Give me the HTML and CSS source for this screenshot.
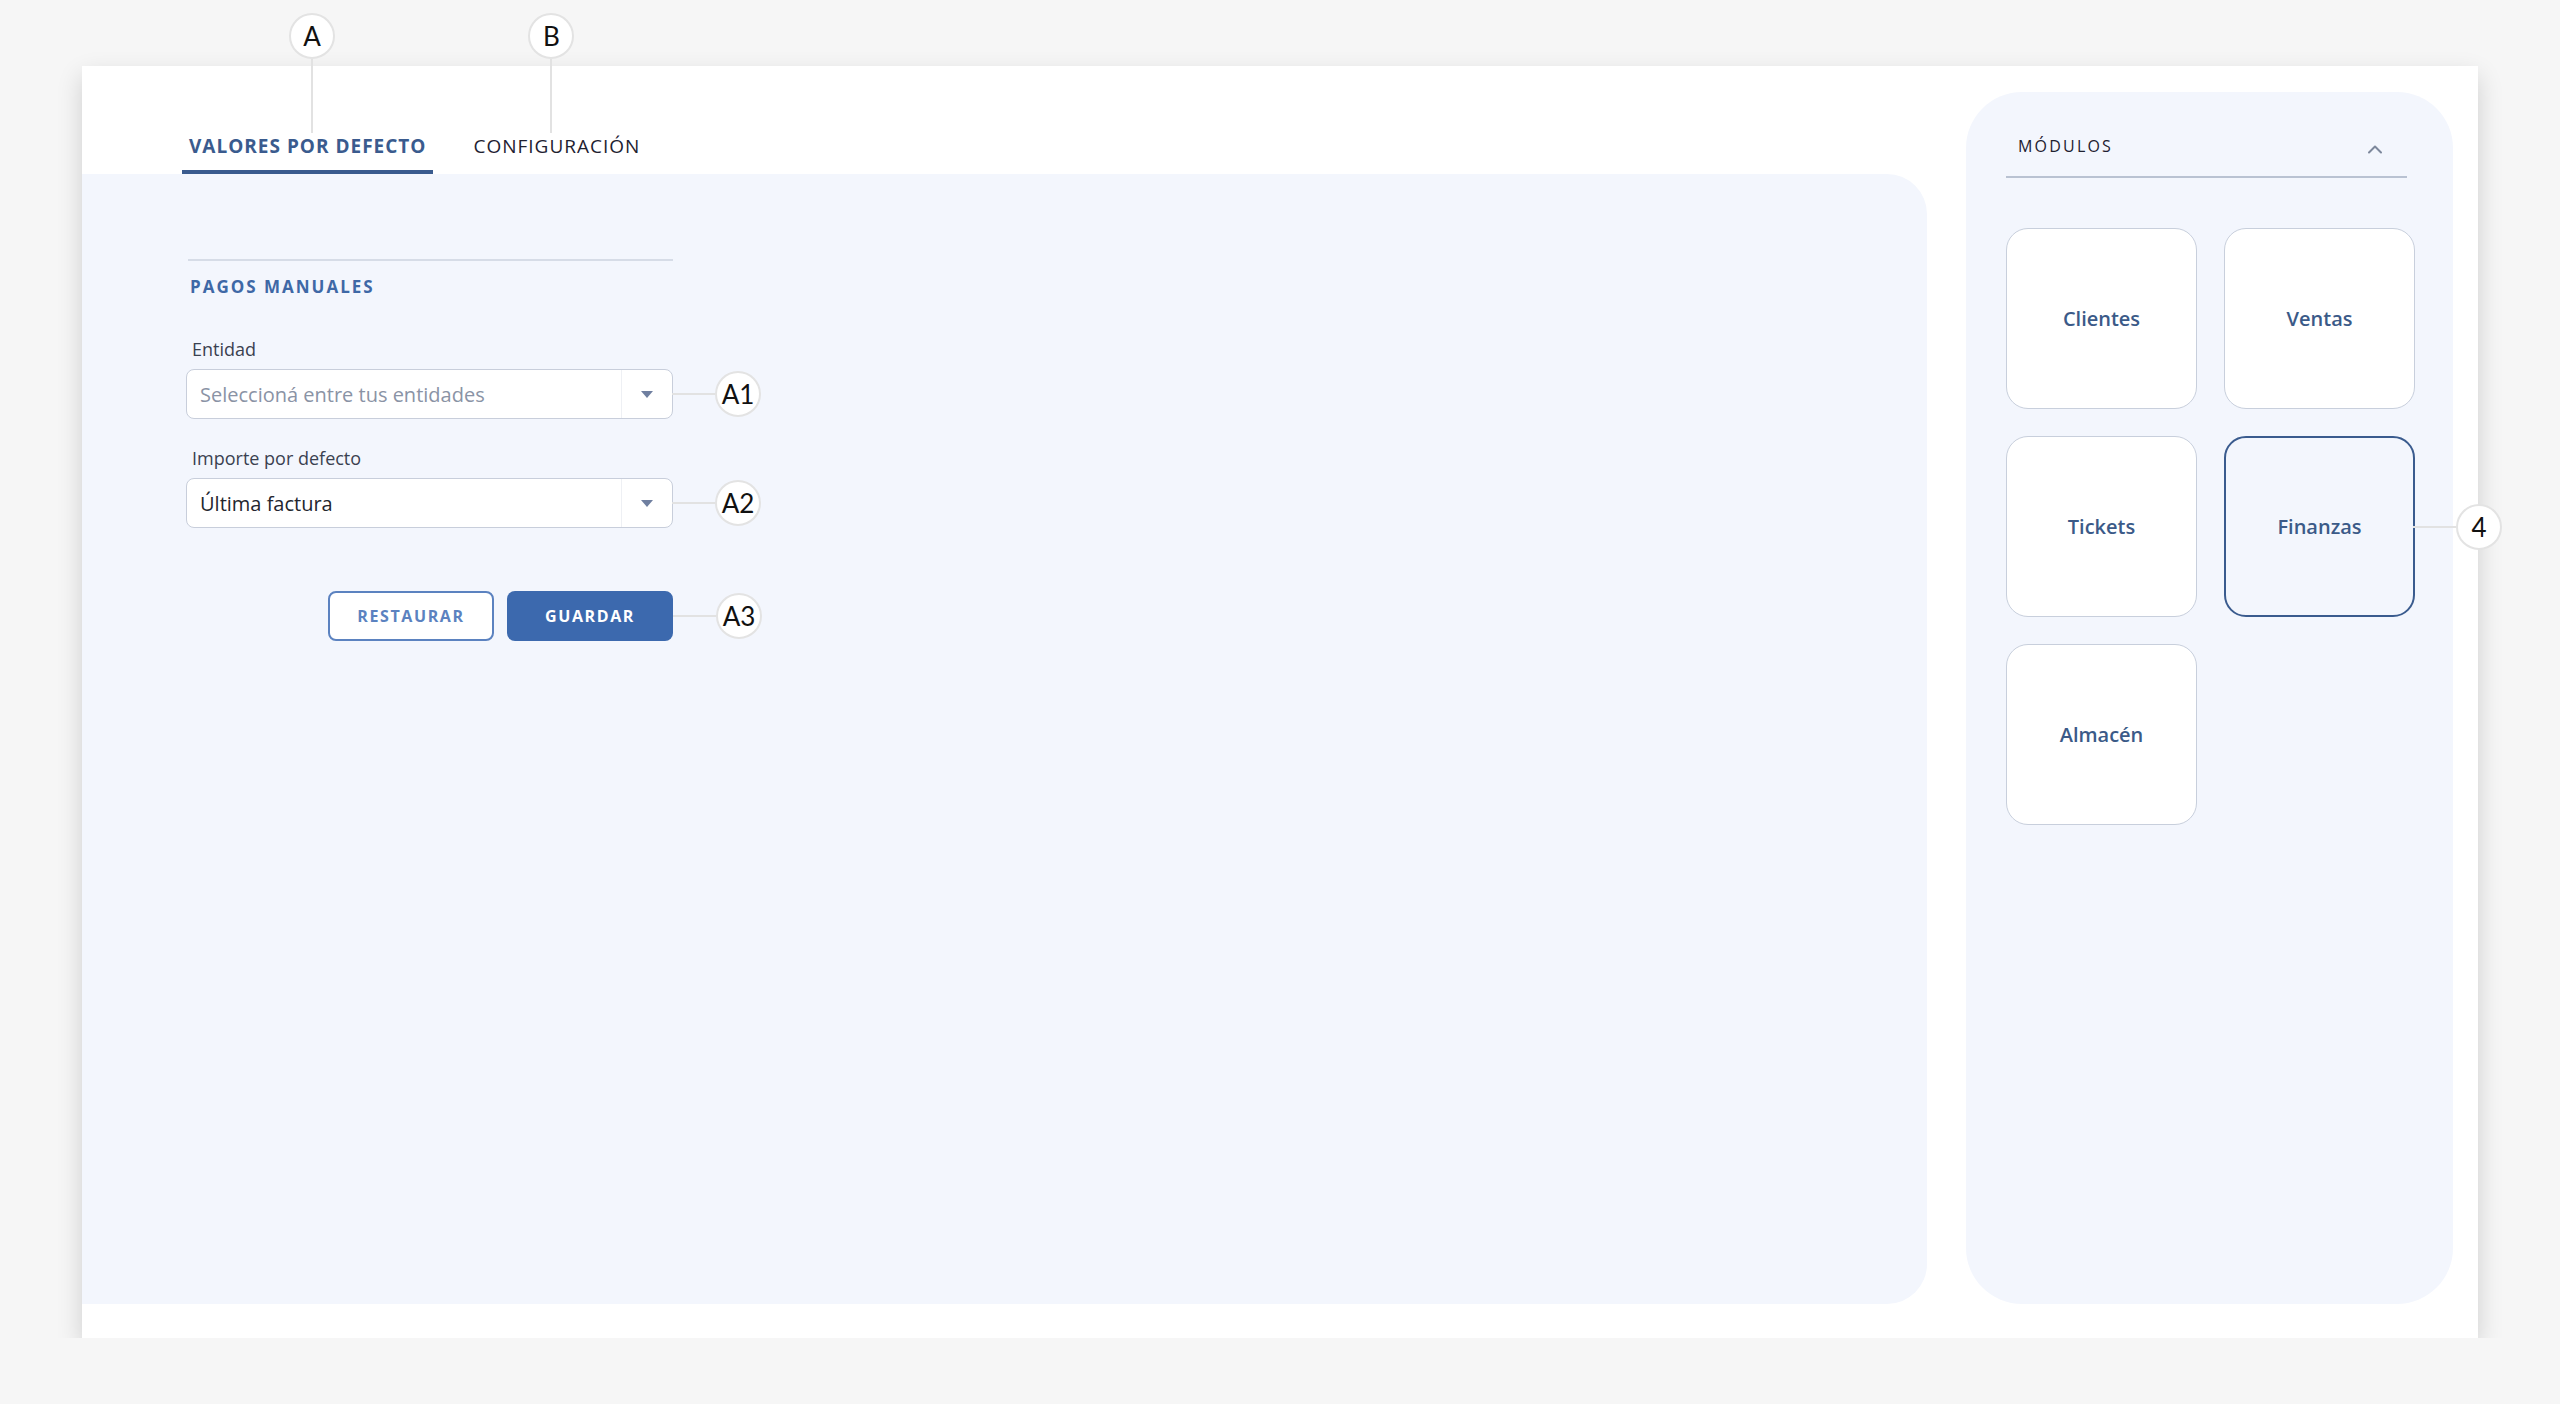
FILE: index.html
```html
<!DOCTYPE html>
<html lang="es">
<head>
    <meta charset="UTF-8">
    <meta name="viewport" content="width=device-width, initial-scale=1.0">
    <title>Valores por defecto</title>
    <link rel="stylesheet" href="styles.css">
</head>
<body>
    <div class="frame">
        <main class="main">
            <nav class="tabs">
                <a class="tab tab-active">
                    VALORES POR DEFECTO
                    <span class="callout callout-up callout-a"><span class="callout-dot">A</span></span>
                </a>
                <a class="tab">
                    CONFIGURACIÓN
                    <span class="callout callout-up callout-b"><span class="callout-dot">B</span></span>
                </a>
            </nav>

            <section class="panel">
                <div class="form">
                    <div class="form-rule"></div>
                    <h2 class="form-title">PAGOS MANUALES</h2>

                    <label class="field-label">Entidad</label>
                    <div class="select">
                        <span class="select-value placeholder">Seleccioná entre tus entidades</span>
                        <span class="select-arrow"><i></i></span>
                        <span class="callout callout-side"><span class="callout-dot">A1</span></span>
                    </div>

                    <label class="field-label">Importe por defecto</label>
                    <div class="select">
                        <span class="select-value">Última factura</span>
                        <span class="select-arrow"><i></i></span>
                        <span class="callout callout-side"><span class="callout-dot">A2</span></span>
                    </div>

                    <div class="actions">
                        <button class="btn btn-outline">RESTAURAR</button>
                        <button class="btn btn-primary">GUARDAR</button>
                        <span class="callout callout-side"><span class="callout-dot">A3</span></span>
                    </div>
                </div>
            </section>
        </main>

        <aside class="modules">
            <div class="modules-header">
                <span class="modules-title">MÓDULOS</span>
                <svg class="chevron" width="16" height="10" viewBox="0 0 16 10">
                    <polyline points="2,8.5 8,2.5 14,8.5" fill="none" stroke="#7d889c" stroke-width="2" stroke-linecap="round" stroke-linejoin="round"/>
                </svg>
            </div>
            <div class="module-grid">
                <div class="module">Clientes</div>
                <div class="module">Ventas</div>
                <div class="module">Tickets</div>
                <div class="module module-active">
                    Finanzas
                    <span class="callout callout-side"><span class="callout-dot">4</span></span>
                </div>
                <div class="module">Almacén</div>
            </div>
        </aside>
    </div>
</body>
</html>
```

FILE: styles.css
```css
body {
    margin: 0;
    padding: 66px 0 0 82px;
    background-color: #f6f6f6;
    font-family: "Open Sans", "Noto Sans", sans-serif;
    color: #2a2f3a;
}
.frame {
    width: 2396px;
    height: 1272px;
    box-sizing: border-box;
    padding: 0 25px 34px 0;
    background-color: #ffffff;
    box-shadow: 0 10px 24px rgba(0, 0, 0, 0.16);
    display: flex;
    gap: 39px;
}

/* left column: tabs + form panel */
.main {
    flex: 1;
    display: flex;
    flex-direction: column;
}
.tabs {
    height: 108px;
    box-sizing: border-box;
    padding-left: 100px;
    display: flex;
    align-items: flex-end;
    gap: 33px;
}
.tab {
    position: relative;
    padding: 0 7px 12px;
    border-bottom: 4px solid transparent;
    font-size: 19px;
    line-height: 24px;
    letter-spacing: 1px;
    color: #1e2130;
    cursor: pointer;
}
.tab-active {
    font-weight: 700;
    color: #3a5b8e;
    border-bottom-color: #3a5b8e;
}
.panel {
    flex: 1;
    background-color: #f3f6fd;
    border-radius: 0 40px 40px 0;
    padding: 85px 0 0 104px;
}
.form {
    width: 487px;
}
.form-rule {
    height: 2px;
    margin-left: 2px;
    background-color: #d6dce7;
}
.form-title {
    margin: 14px 0 38px 4px;
    font-size: 17px;
    line-height: 24px;
    font-weight: 700;
    letter-spacing: 2px;
    color: #3e68a6;
}
.field-label {
    display: block;
    margin: 0 0 8px 6px;
    font-size: 18px;
    line-height: 24px;
    color: #3a4150;
}
.select {
    position: relative;
    height: 50px;
    box-sizing: border-box;
    margin-bottom: 27px;
    background-color: #ffffff;
    border: 1px solid #c8cedb;
    border-radius: 8px;
    display: flex;
    align-items: center;
}
.select-value {
    flex: 1;
    padding-left: 13px;
    font-size: 20px;
    color: #23262e;
}
.select-value.placeholder {
    color: #8a93a5;
}
.select-arrow {
    width: 50px;
    height: 100%;
    border-left: 1px solid #eef0f4;
    display: flex;
    align-items: center;
    justify-content: center;
}
.select-arrow i {
    width: 0;
    height: 0;
    border-left: 6px solid transparent;
    border-right: 6px solid transparent;
    border-top: 7px solid #6f7fa0;
}
.actions {
    position: relative;
    margin-top: 63px;
    display: flex;
    justify-content: flex-end;
    gap: 13px;
}
.btn {
    width: 166px;
    height: 50px;
    border-radius: 8px;
    font-family: "Open Sans", sans-serif;
    font-size: 16px;
    font-weight: 700;
    letter-spacing: 1.6px;
    cursor: pointer;
}
.btn-outline {
    background-color: #ffffff;
    border: 2px solid #5b82c0;
    color: #5b82c0;
}
.btn-primary {
    background-color: #3c69ae;
    border: none;
    color: #ffffff;
}

/* right column: modules */
.modules {
    width: 487px;
    margin-top: 26px;
    box-sizing: border-box;
    padding: 42px 38px 0 40px;
    background-color: #f3f6fd;
    border-radius: 56px;
}
.modules-header {
    margin-right: 8px;
    padding: 0 24px 18px 12px;
    border-bottom: 2px solid #b9c2d2;
    display: flex;
    align-items: center;
    justify-content: space-between;
}
.modules-title {
    font-size: 16px;
    line-height: 24px;
    letter-spacing: 2.2px;
    color: #1e2130;
}
.chevron {
    margin-top: 6px;
}
.module-grid {
    margin-top: 50px;
    display: grid;
    grid-template-columns: 191px 191px;
    grid-auto-rows: 181px;
    gap: 27px;
}
.module {
    position: relative;
    box-sizing: border-box;
    background-color: #ffffff;
    border: 1px solid #c8cfdc;
    border-radius: 22px;
    display: flex;
    align-items: center;
    justify-content: center;
    font-size: 20px;
    font-weight: 600;
    color: #3b5a88;
}
.module-active {
    background-color: #f3f6fd;
    border: 2px solid #3a5b8e;
}

/* numbered annotation markers */
.callout {
    position: absolute;
    display: flex;
    align-items: center;
    pointer-events: none;
}
.callout-dot {
    width: 46px;
    height: 46px;
    box-sizing: border-box;
    border: 2px solid #e3e3e3;
    border-radius: 50%;
    background-color: #ffffff;
    display: flex;
    align-items: center;
    justify-content: center;
    font-family: "Lato", "Liberation Sans", sans-serif;
    font-weight: 400;
    font-size: 26px;
    letter-spacing: 0;
    color: #111111;
}
.callout-side {
    left: 100%;
    top: 50%;
    transform: translateY(-50%);
}
.callout-side::before {
    content: "";
    width: 43px;
    height: 2px;
    background-color: #e2e2e2;
}
.callout-up {
    bottom: calc(100% + 1px);
    flex-direction: column;
    transform: translateX(-50%);
}
.callout-up::after {
    content: "";
    width: 2px;
    height: 74px;
    background-color: #e2e2e2;
}
.callout-a {
    left: 130px;
}
.callout-b {
    left: 85px;
}
```
